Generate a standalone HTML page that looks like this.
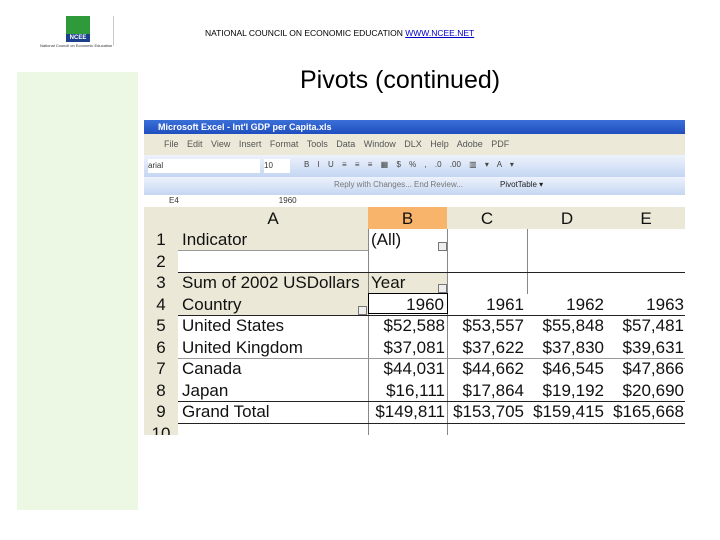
<!DOCTYPE html>
<html><head><style>
body{margin:0;width:720px;height:540px;background:#fff;position:relative;overflow:hidden;font-family:"Liberation Sans",sans-serif}
.a{position:absolute}
.c{position:absolute;font-size:17px;color:#111;white-space:nowrap;line-height:21px}
.r{text-align:right}
.hl{position:absolute;height:1px;background:#222}
</style></head><body>
<div class="a" style="left:66px;top:16px;width:24px;height:18px;background:#2e9a3a"></div>
<div class="a" style="left:66px;top:34px;width:24px;height:8px;background:#1a3f8c;color:#fff;font-size:6px;text-align:center;line-height:8px;font-weight:bold">NCEE</div>
<div class="a" style="left:40px;top:43px;font-size:4px;color:#333">National Council on Economic Education</div>
<div class="a" style="left:113px;top:16px;width:1px;height:30px;background:#ccc"></div>
<div class="a" style="left:205px;top:28px;font-size:8.5px;color:#000">NATIONAL COUNCIL ON ECONOMIC EDUCATION <span style="color:#00c;text-decoration:underline">WWW.NCEE.NET</span></div>
<div class="a" style="left:17px;top:72px;width:121px;height:438px;background:#ecf7e4"></div>
<div class="a" style="left:300px;top:66px;font-size:25px;color:#000">Pivots (continued)</div>

<div class="a" style="left:144px;top:120px;width:541px;height:315px;background:#fff;overflow:hidden">
 <div class="a" style="left:0;top:0;width:541px;height:14px;background:linear-gradient(#3b6fd8,#1f4fbf);color:#fff;font-size:9px;font-weight:bold;line-height:14px;padding-left:14px">Microsoft Excel - Int'l GDP per Capita.xls</div>
 <div class="a" style="left:0;top:14px;width:541px;height:21px;background:#ece9d8;font-size:9px;color:#555;line-height:21px;padding-left:20px;word-spacing:6px">File Edit View Insert Format Tools Data Window DLX Help Adobe PDF</div>
 <div class="a" style="left:0;top:35px;width:541px;height:22px;background:linear-gradient(#eef3fc,#c4d6f2)"></div>
 <div class="a" style="left:4px;top:39px;width:112px;height:14px;background:#fff;font-size:8px;line-height:14px;color:#333">arial</div>
 <div class="a" style="left:120px;top:39px;width:26px;height:14px;background:#fff;font-size:8px;line-height:14px;color:#333">10</div>
 <div class="a" style="left:160px;top:40px;font-size:8px;color:#444;word-spacing:6px">B I U ≡ ≡ ≡ ▦ $ % , .0 .00 ▥ ▾ A ▾</div>
 <div class="a" style="left:0;top:57px;width:541px;height:18px;background:linear-gradient(#eef3fc,#c4d6f2)"></div>
 <div class="a" style="left:190px;top:60px;font-size:8px;color:#777">Reply with Changes... End Review...</div>
 <div class="a" style="left:356px;top:60px;font-size:8px;color:#222">PivotTable ▾</div>
 <div class="a" style="left:0;top:75px;width:541px;height:12px;background:#fff;font-size:8px;line-height:12px;color:#333"><span style="margin-left:25px">E4</span><span style="margin-left:100px">1960</span></div>
 <div class="a" style="left:0;top:87px;width:541px;height:22px;background:#ebe8d7"></div>
 <div class="a" style="left:224px;top:87px;width:79px;height:22px;background:#f9b46b"></div>
 <div class="a" style="left:0;top:174px;width:34px;height:21px;background:#f9b46b"></div>
 <div class="a" style="left:0;top:109px;width:34px;height:206px;background:#ebe8d7"></div>
 <div class="a" style="left:34px;top:109px;width:190px;height:21px;background:#ebe8d7"></div>
 <div class="a" style="left:34px;top:152px;width:190px;height:43px;background:#ebe8d7"></div>
 <div class="a" style="left:224px;top:152px;width:79px;height:21px;background:#ebe8d7"></div>
 <div class="c" style="left:34px;top:88px;width:190px;text-align:center">A</div>
 <div class="c" style="left:224px;top:88px;width:79px;text-align:center">B</div>
 <div class="c" style="left:303px;top:88px;width:80px;text-align:center">C</div>
 <div class="c" style="left:383px;top:88px;width:80px;text-align:center">D</div>
 <div class="c" style="left:463px;top:88px;width:78px;text-align:center">E</div>
 <div class="a" style="left:224px;top:109px;width:1px;height:206px;background:#888"></div>
 <div class="a" style="left:303px;top:109px;width:1px;height:206px;background:#888"></div>
 <div class="a" style="left:383px;top:109px;width:1px;height:65px;background:#888"></div>
 <div class="hl" style="left:34px;top:130px;width:190px;background:#999"></div>
 <div class="hl" style="left:34px;top:152px;width:507px"></div>
 <div class="hl" style="left:34px;top:195px;width:507px"></div>
 <div class="hl" style="left:34px;top:238px;width:507px;background:#999"></div>
 <div class="hl" style="left:34px;top:281px;width:507px"></div>
 <div class="hl" style="left:34px;top:303px;width:507px"></div>
 <div class="a" style="left:224px;top:173px;height:21px;border:1px solid #000;box-sizing:border-box;width:80px"></div>
 <div class="c" style="left:0;top:109px;width:34px;text-align:center">1</div><div class="c" style="left:38px;top:109px">Indicator</div><div class="c" style="left:227px;top:109px">(All)</div>
 <div class="c" style="left:0;top:131px;width:34px;text-align:center">2</div>
 <div class="c" style="left:0;top:152px;width:34px;text-align:center">3</div><div class="c" style="left:38px;top:152px">Sum of 2002 USDollars</div><div class="c" style="left:227px;top:152px">Year</div>
 <div class="c" style="left:0;top:174px;width:34px;text-align:center">4</div><div class="c" style="left:38px;top:174px">Country</div>
 <div class="c r" style="left:224px;top:174px;width:76px">1960</div><div class="c r" style="left:303px;top:174px;width:77px">1961</div><div class="c r" style="left:383px;top:174px;width:77px">1962</div><div class="c r" style="left:463px;top:174px;width:77px">1963</div>
 <div class="c" style="left:0;top:195px;width:34px;text-align:center">5</div><div class="c" style="left:38px;top:195px">United States</div>
 <div class="c r" style="left:224px;top:195px;width:77px">$52,588</div><div class="c r" style="left:303px;top:195px;width:77px">$53,557</div><div class="c r" style="left:383px;top:195px;width:77px">$55,848</div><div class="c r" style="left:463px;top:195px;width:77px">$57,481</div>
 <div class="c" style="left:0;top:217px;width:34px;text-align:center">6</div><div class="c" style="left:38px;top:217px">United Kingdom</div>
 <div class="c r" style="left:224px;top:217px;width:77px">$37,081</div><div class="c r" style="left:303px;top:217px;width:77px">$37,622</div><div class="c r" style="left:383px;top:217px;width:77px">$37,830</div><div class="c r" style="left:463px;top:217px;width:77px">$39,631</div>
 <div class="c" style="left:0;top:238px;width:34px;text-align:center">7</div><div class="c" style="left:38px;top:238px">Canada</div>
 <div class="c r" style="left:224px;top:238px;width:77px">$44,031</div><div class="c r" style="left:303px;top:238px;width:77px">$44,662</div><div class="c r" style="left:383px;top:238px;width:77px">$46,545</div><div class="c r" style="left:463px;top:238px;width:77px">$47,866</div>
 <div class="c" style="left:0;top:260px;width:34px;text-align:center">8</div><div class="c" style="left:38px;top:260px">Japan</div>
 <div class="c r" style="left:224px;top:260px;width:77px">$16,111</div><div class="c r" style="left:303px;top:260px;width:77px">$17,864</div><div class="c r" style="left:383px;top:260px;width:77px">$19,192</div><div class="c r" style="left:463px;top:260px;width:77px">$20,690</div>
 <div class="c" style="left:0;top:281px;width:34px;text-align:center">9</div><div class="c" style="left:38px;top:281px">Grand Total</div>
 <div class="c r" style="left:224px;top:281px;width:77px">$149,811</div><div class="c r" style="left:303px;top:281px;width:77px">$153,705</div><div class="c r" style="left:383px;top:281px;width:77px">$159,415</div><div class="c r" style="left:463px;top:281px;width:77px">$165,668</div>
 <div class="c" style="left:0;top:303px;width:34px;text-align:center">10</div>
 <div class="a" style="left:294px;top:122px;width:7px;height:7px;border:1px solid #777;background:#eee"></div>
 <div class="a" style="left:294px;top:164px;width:7px;height:7px;border:1px solid #777;background:#eee"></div>
 <div class="a" style="left:214px;top:186px;width:7px;height:7px;border:1px solid #777;background:#eee"></div>
</div>
</body></html>
